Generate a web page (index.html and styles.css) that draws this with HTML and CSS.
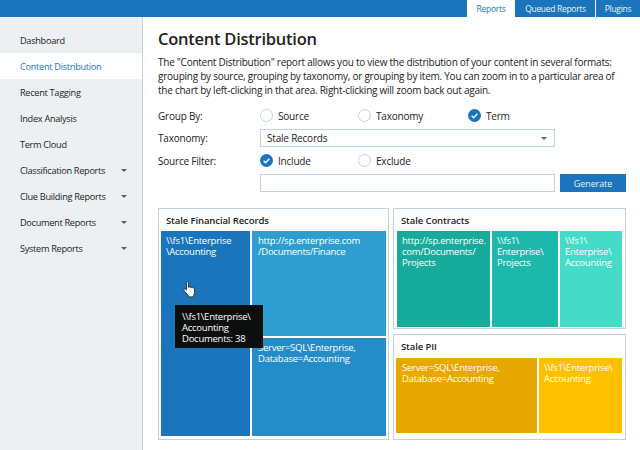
FILE: index.html
```html
<!DOCTYPE html>
<html lang="en">
<head>
  <meta charset="UTF-8" />
  <title>Content Distribution</title>
  <link rel="stylesheet" href="styles.css">
</head>
<body>

  <header class="topbar">
    <a class="tab active">Reports</a>
    <a class="tab queued">Queued Reports</a>
    <a class="tab plugins">Plugins</a>
  </header>

  <div class="layout">
    <nav class="sidebar">
      <a class="nav-item">Dashboard</a>
      <a class="nav-item active">Content Distribution</a>
      <a class="nav-item">Recent Tagging</a>
      <a class="nav-item">Index Analysis</a>
      <a class="nav-item">Term Cloud</a>
      <a class="nav-item">Classification Reports <span class="caret"></span></a>
      <a class="nav-item">Clue Building Reports <span class="caret"></span></a>
      <a class="nav-item">Document Reports <span class="caret"></span></a>
      <a class="nav-item">System Reports <span class="caret"></span></a>
    </nav>

    <main class="content">
      <h1>Content Distribution</h1>
      <p class="intro">The "Content Distribution" report allows you to view the distribution of your content in several formats: grouping by source, grouping by taxonomy, or grouping by item. You can zoom in to a particular area of the chart by left-clicking in that area. Right-clicking will zoom back out again.</p>

      <div class="form-row radio-row group-row">
        <span class="form-label">Group By:</span>
        <div class="radio-group">
          <span class="radio"><i class="dot"></i>Source</span>
          <span class="radio"><i class="dot"></i>Taxonomy</span>
          <span class="radio"><i class="dot checked"><svg viewBox="0 0 13 13"><path d="M3.6 6.7l2 2 3.8-4"/></svg></i>Term</span>
        </div>
      </div>

      <div class="form-row">
        <span class="form-label">Taxonomy:</span>
        <div class="select">Stale Records <span class="caret"></span></div>
      </div>

      <div class="form-row radio-row filter-row">
        <span class="form-label">Source Filter:</span>
        <div class="radio-group">
          <span class="radio"><i class="dot checked"><svg viewBox="0 0 13 13"><path d="M3.6 6.7l2 2 3.8-4"/></svg></i>Include</span>
          <span class="radio"><i class="dot"></i>Exclude</span>
        </div>
      </div>

      <div class="form-row input-row">
        <span class="form-label"></span>
        <div class="text-input"></div>
        <button class="generate">Generate</button>
      </div>

      <div class="charts">
        <section class="panel financial">
          <h2>Stale Financial Records</h2>
          <div class="treemap">
            <div class="cell fin-a">\\fs1\Enterprise<br>\Accounting</div>
            <div class="stack">
              <div class="cell fin-b">http://sp.enterprise.com<br>/Documents/Finance</div>
              <div class="cell fin-c">Server=SQL\Enterprise,<br>Database=Accounting</div>
            </div>
          </div>
          <svg class="hand" viewBox="0 0 13 17">
            <path d="M3.6 1.6c0-1.2 1.9-1.2 1.9 0v4.6c.9-.5 1.7-.3 2 .3.8-.4 1.6-.2 1.9.4.9-.4 2-.1 2.1 1v3.6c0 1.3-.5 2-.9 3v1.400H5.200v-1.300L1.200 9.700c-.8-1-.1-2.200 1.100-1.800l1.300 1z"/>
          </svg>
          <div class="tooltip">\\fs1\Enterprise\<br>Accounting<br>Documents: 38</div>
        </section>

        <div class="panel-column">
          <section class="panel contracts">
            <h2>Stale Contracts</h2>
            <div class="treemap">
              <div class="cell con-a">http://sp.enterprise.<br>com/Documents/<br>Projects</div>
              <div class="cell con-b">\\fs1\<br>Enterprise\<br>Projects</div>
              <div class="cell con-c">\\fs1\<br>Enterprise\<br>Accounting</div>
            </div>
          </section>

          <section class="panel pii">
            <h2>Stale PII</h2>
            <div class="treemap">
              <div class="cell pii-a">Server=SQL\Enterprise,<br>Database=Accounting</div>
              <div class="cell pii-b">\\fs1\Enterprise\<br>Accounting</div>
            </div>
          </section>
        </div>
      </div>
    </main>
  </div>

</body>
</html>
```

FILE: styles.css
```css
:root {
  --blue: #1a75bc;
  --line: #bfd2e3;
  --side: #edf0f3;
  --text: #222222;
}

html, body {
  height: 100%;
}

body {
  margin: 0;
  overflow: hidden;
  font-family: "Open Sans", "Noto Sans", sans-serif;
  font-size: 10px;
  color: var(--text);
  background: #ffffff;
}

/* top bar */
.topbar {
  height: 17px;
  background: var(--blue);
  display: flex;
  justify-content: flex-end;
}

.tab {
  color: #e8f2fa;
  font-size: 8.5px;
  letter-spacing: -0.3px;
  line-height: 17px;
  text-align: center;
}

.tab.active {
  width: 48px;
  background: #ffffff;
  color: var(--blue);
  margin-right: 1px;
}

.tab.queued {
  width: 79px;
  border-right: 1px solid #ffffff;
}

.tab.plugins {
  width: 44px;
}

.layout {
  display: flex;
  height: 433px;
}

/* sidebar */
.sidebar {
  width: 142px;
  flex-shrink: 0;
  padding-top: 10px;
  background: var(--side);
  border-right: 1px solid var(--line);
}

.nav-item {
  display: flex;
  align-items: center;
  justify-content: space-between;
  height: 26px;
  padding: 0 15px 0 20px;
  font-size: 9.2px;
  letter-spacing: -0.3px;
  color: #1c1c1c;
}

.nav-item.active {
  background: #ffffff;
  color: var(--blue);
}

.caret {
  width: 0;
  height: 0;
  border-left: 3px solid transparent;
  border-right: 3px solid transparent;
  border-top: 3px solid #555f66;
}

/* main area */
.content {
  flex: 1;
  padding: 11px 14px 0 15px;
}

h1 {
  margin: 0 0 5px;
  font-size: 16.5px;
  letter-spacing: -0.25px;
  line-height: 22px;
  font-weight: 600;
}

.intro {
  width: 458px;
  margin: 0 0 8px;
  font-size: 10px;
  letter-spacing: -0.25px;
  line-height: 14px;
}

.form-row {
  display: flex;
  align-items: center;
}

.form-label {
  width: 102px;
  flex-shrink: 0;
  font-size: 10px;
  letter-spacing: -0.2px;
}

.group-row {
  height: 21px;
  margin-bottom: 3px;
}

.filter-row {
  height: 27px;
}

.input-row {
  height: 18px;
}

.radio-group {
  display: grid;
  grid-template-columns: 98px 110px auto;
}

.radio {
  display: flex;
  align-items: center;
  gap: 5px;
  font-size: 10px;
  letter-spacing: -0.2px;
}

.dot {
  width: 13px;
  height: 13px;
  box-sizing: border-box;
  border: 1px solid var(--line);
  border-radius: 50%;
  background: #ffffff;
}

.dot.checked {
  border: 0;
  background: var(--blue);
}

.dot svg {
  display: block;
}

.dot path {
  fill: none;
  stroke: #ffffff;
  stroke-width: 1.4;
}

.select {
  width: 295px;
  height: 18px;
  box-sizing: border-box;
  display: flex;
  align-items: center;
  justify-content: space-between;
  padding: 0 7px 0 6px;
  border: 1px solid var(--line);
  font-size: 10px;
  letter-spacing: -0.2px;
}

.text-input {
  width: 295px;
  height: 18px;
  box-sizing: border-box;
  border: 1px solid var(--line);
}

.generate {
  width: 66px;
  height: 18px;
  margin-left: 5px;
  padding: 0;
  border: 0;
  background: var(--blue);
  color: #e8f2fa;
  font: 9px "Open Sans", sans-serif;
  letter-spacing: -0.1px;
}

/* charts */
.charts {
  display: flex;
  gap: 4px;
  margin-top: 16px;
  height: 232px;
}

.panel {
  position: relative;
  display: flex;
  flex-direction: column;
  box-sizing: border-box;
  border: 1px solid var(--line);
  padding: 0 2px 3px;
}

.panel h2 {
  margin: 0;
  height: 22px;
  padding: 0 5px;
  font-size: 9.5px;
  letter-spacing: -0.1px;
  line-height: 24px;
  font-weight: 600;
}

.financial {
  width: 231px;
}

.panel-column {
  width: 233px;
  display: flex;
  flex-direction: column;
  gap: 5px;
}

.contracts {
  height: 121px;
  padding: 0 3px 1px;
}

.contracts h2 {
  padding: 0 4px;
}

.pii {
  flex: 1;
  padding: 0 3px 6px 2px;
}

.pii h2 {
  height: 23px;
}

.treemap {
  flex: 1;
  display: flex;
  gap: 2px;
  min-height: 0;
}

.stack {
  flex: 1;
  display: flex;
  flex-direction: column;
  gap: 2px;
}

.cell {
  padding: 4px 5px 5px;
  color: #ffffff;
  font-size: 9.5px;
  letter-spacing: -0.25px;
  line-height: 11px;
}

.fin-a { width: 79px; background: var(--blue); }
.fin-b { flex: 105; padding-left: 6px; background: #2e9ed0; }
.fin-c { flex: 98; padding-left: 6px; background: #258cca; }

.con-a { width: 83px; background: #17ab9b; }
.con-b { width: 56px; background: #1cb9aa; }
.con-c { flex: 1; background: #44dcc8; }

.pii-a { width: 130px; padding-left: 6px; background: #e8a800; }
.pii-b { flex: 1; background: #ffc000; }

/* hover state over the chart */
.hand {
  position: absolute;
  left: 24px;
  top: 72px;
  width: 13px;
  height: 17px;
}

.hand path {
  fill: #ffffff;
  stroke: #2b3338;
  stroke-width: 1;
}

.tooltip {
  position: absolute;
  left: 16px;
  top: 96px;
  width: 76px;
  height: 32px;
  padding: 6px 5px 5px 7px;
  background: #0d0f0f;
  color: #ffffff;
  font-size: 9.5px;
  letter-spacing: -0.25px;
  line-height: 11px;
}
```
